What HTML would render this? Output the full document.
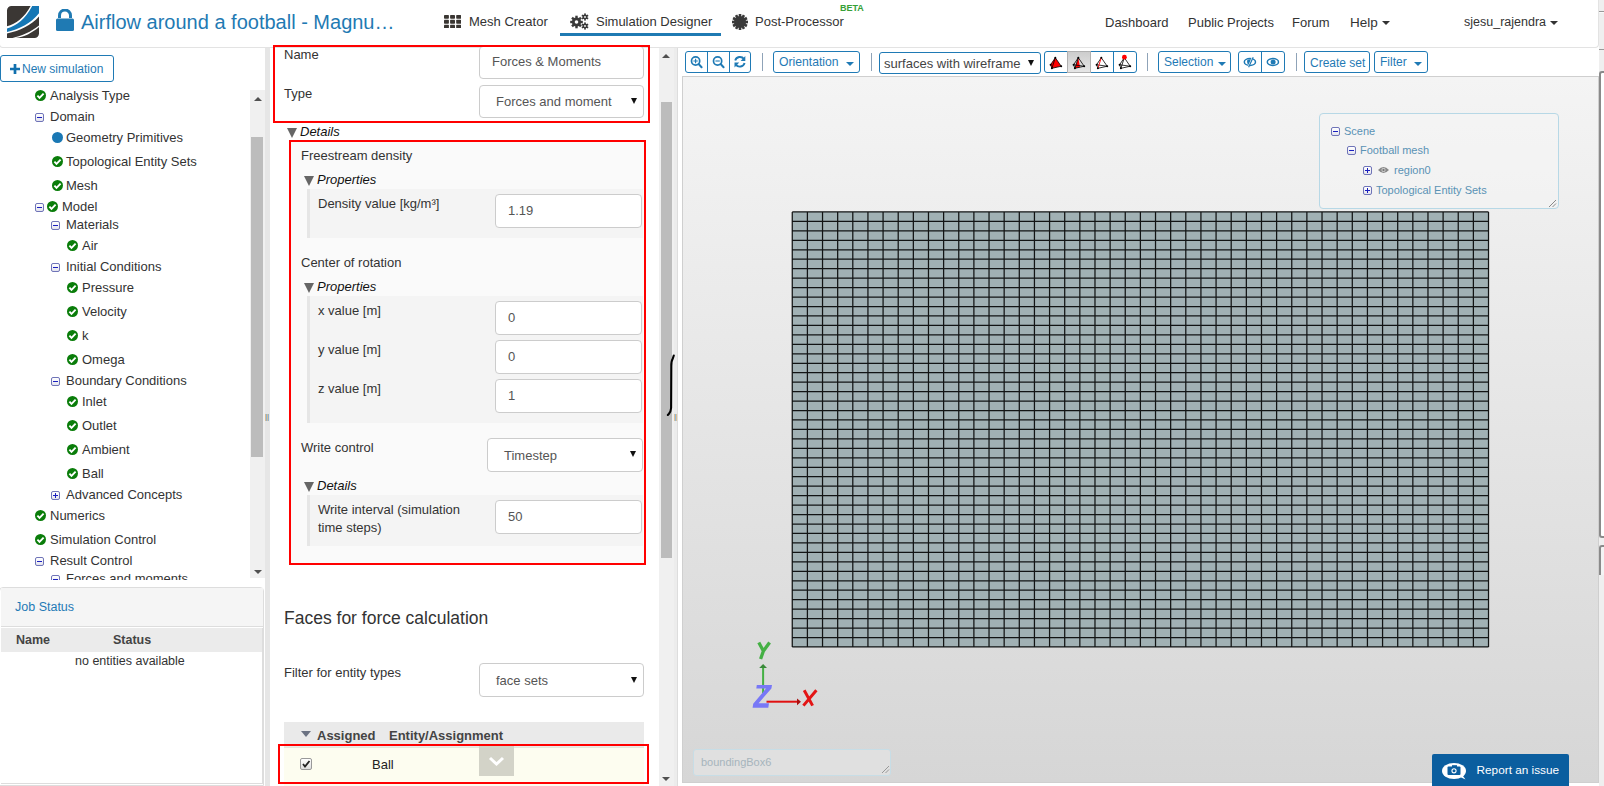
<!DOCTYPE html>
<html><head><meta charset="utf-8">
<style>
*{box-sizing:border-box}
html,body{margin:0;padding:0;width:1604px;height:786px;overflow:hidden;background:#fff;font-family:"Liberation Sans",sans-serif;color:#333}
.a{position:absolute}
.t{position:absolute;white-space:nowrap;line-height:1}
.red{position:absolute;border:2px solid #f00}
.inp{position:absolute;background:#fff;border:1px solid #ccc;border-radius:4px}
.sel{position:absolute;background:#fff;border:1px solid #ccc;border-radius:4px}
.gsec{position:absolute;background:#f4f4f4;border-left:3px solid #e6e6e6}
.tri{position:absolute;width:0;height:0;border-left:6px solid transparent;border-right:6px solid transparent;border-top:11px solid #555}
.chk{position:absolute;width:11px;height:11px;border-radius:50%;background:#0b7d12}
.chk:after{content:"";position:absolute;left:2.3px;top:2.6px;width:6.5px;height:3.8px;border-left:2px solid #fff;border-bottom:2px solid #fff;transform:rotate(-45deg)}
.mbox{position:absolute;width:9px;height:9px;border:1px solid #6f74b8;border-radius:2px;background:linear-gradient(#fff,#e4e4ee)}
.mbox:after{content:"";position:absolute;left:1px;top:3px;width:5px;height:1px;background:#1a1fc0}
.pbox{position:absolute;width:9px;height:9px;border:1px solid #6f74b8;border-radius:2px;background:linear-gradient(#fff,#e4e4ee)}
.pbox:after{content:"";position:absolute;left:1px;top:3px;width:5px;height:1px;background:#1a1fc0}
.pbox:before{content:"";position:absolute;left:3px;top:1px;width:1px;height:5px;background:#1a1fc0}
.btn{position:absolute;border:1px solid #1f7ab5;border-radius:3px;background:#fff;color:#1f7ab5}
.caret{position:absolute;width:0;height:0;border-left:4px solid transparent;border-right:4px solid transparent;border-top:4px solid #333}
</style></head><body>

<!-- ===== HEADER ===== -->
<div class="a" style="left:-1px;top:0;width:1600px;height:48px;background:#fff;border:1px solid #e3e3e3;border-top:none;border-radius:0 0 4px 4px"></div>
<div class="a" style="left:1599px;top:0;width:5px;height:786px;background:#efefef"></div>
<div class="a" style="left:1599px;top:11px;width:5px;height:1px;background:#999"></div><div class="a" style="left:1599px;top:12px;width:5px;height:1px;background:#fafafa"></div>
<div class="a" style="left:1599px;top:49px;width:5px;height:1px;background:#999"></div>
<div class="a" style="left:1599px;top:71px;width:6px;height:467px;border-left:2px solid #8a8a8a;border-top:2px solid #8a8a8a;border-bottom:2px solid #8a8a8a;border-radius:3px 0 0 3px;background:#fff"></div>
<div class="a" style="left:1599px;top:545px;width:6px;height:30px;border-left:2px solid #8a8a8a;border-top:2px solid #8a8a8a;border-radius:3px 0 0 0;background:#f4f4f4"></div>

<!-- logo -->
<svg class="a" style="left:7px;top:6px" width="32" height="32" viewBox="0 0 32 32">
  <defs><clipPath id="lc"><path d="M4.5 0 H32 V27.5 A4.5 4.5 0 0 1 27.5 32 H0 V4.5 A4.5 4.5 0 0 1 4.5 0Z"/></clipPath></defs>
  <g clip-path="url(#lc)">
  <rect width="32" height="32" fill="#3b3734"/>
  <path d="M23.6 0 C17 12 9 18 0 20.3 L0 27.5 C13 25 24 19.5 32 10.6 L32 0Z" fill="#fff"/>
  <path d="M25.2 0 C18.5 13 10 19.5 0 22.5 L0 25.9 C13 23 24 17 32 7.2 L32 0Z" fill="#1577b5"/>
  <path d="M32 19.6 C24 26 15 30 5.5 32 L8.5 32 C17 31 25 27 32 21Z" fill="#fff"/>
  </g>
</svg>
<!-- lock -->
<svg class="a" style="left:56px;top:9px" width="18" height="22" viewBox="0 0 18 22">
  <path d="M3.5 9 V6.5 A5.5 5.5 0 0 1 14.5 6.5 V9" fill="none" stroke="#1f7ab3" stroke-width="3"/>
  <rect x="0" y="9.5" width="18" height="12.5" rx="1.5" fill="#1f7ab3"/>
</svg>
<div class="t" style="left:81px;top:12px;font-size:20px;color:#1f7ab3">Airflow around a football - Magnu…</div>

<!-- nav -->
<svg class="a" style="left:444px;top:14.5px" width="17" height="13.5" viewBox="0 0 17 13.5">
  <g fill="#3a3632"><rect x="0.0" y="0.00" width="4.9" height="3.8" rx=".7"/><rect x="6.1" y="0.00" width="4.9" height="3.8" rx=".7"/><rect x="12.2" y="0.00" width="4.9" height="3.8" rx=".7"/><rect x="0.0" y="4.85" width="4.9" height="3.8" rx=".7"/><rect x="6.1" y="4.85" width="4.9" height="3.8" rx=".7"/><rect x="12.2" y="4.85" width="4.9" height="3.8" rx=".7"/><rect x="0.0" y="9.70" width="4.9" height="3.8" rx=".7"/><rect x="6.1" y="9.70" width="4.9" height="3.8" rx=".7"/><rect x="12.2" y="9.70" width="4.9" height="3.8" rx=".7"/></g>
</svg>
<div class="t" style="left:469px;top:14.7px;font-size:13px;color:#333">Mesh Creator</div>
<svg class="a" style="left:570px;top:13px" width="19" height="17" viewBox="0 0 19 17">
  <g fill="#3a3a3a">
   <circle cx="6.5" cy="9" r="4.6"/>
   <g transform="translate(6.5 9)"><rect x="-1.2" y="-6.3" width="2.4" height="12.6"/><rect x="-1.2" y="-6.3" width="2.4" height="12.6" transform="rotate(45)"/><rect x="-1.2" y="-6.3" width="2.4" height="12.6" transform="rotate(90)"/><rect x="-1.2" y="-6.3" width="2.4" height="12.6" transform="rotate(135)"/></g>
   <circle cx="15" cy="4" r="2.4"/>
   <g transform="translate(15 4)"><rect x="-.8" y="-3.6" width="1.6" height="7.2"/><rect x="-.8" y="-3.6" width="1.6" height="7.2" transform="rotate(60)"/><rect x="-.8" y="-3.6" width="1.6" height="7.2" transform="rotate(120)"/></g>
   <circle cx="15" cy="13" r="2.4"/>
   <g transform="translate(15 13)"><rect x="-.8" y="-3.6" width="1.6" height="7.2"/><rect x="-.8" y="-3.6" width="1.6" height="7.2" transform="rotate(60)"/><rect x="-.8" y="-3.6" width="1.6" height="7.2" transform="rotate(120)"/></g>
  </g>
  <circle cx="6.5" cy="9" r="1.8" fill="#fff"/><circle cx="15" cy="4" r=".9" fill="#fff"/><circle cx="15" cy="13" r=".9" fill="#fff"/>
</svg>
<div class="t" style="left:596px;top:14.7px;font-size:13px;color:#333">Simulation Designer</div>
<div class="a" style="left:560px;top:33px;width:161px;height:3px;background:#1f7ab3"></div>
<svg class="a" style="left:732px;top:14px" width="16" height="16" viewBox="0 0 16 16">
  <g fill="#3a3a3a" transform="translate(8 8)">
  <circle r="6"/>
  <rect x="-1.3" y="-8" width="2.6" height="16"/><rect x="-1.3" y="-8" width="2.6" height="16" transform="rotate(30)"/><rect x="-1.3" y="-8" width="2.6" height="16" transform="rotate(60)"/><rect x="-1.3" y="-8" width="2.6" height="16" transform="rotate(90)"/><rect x="-1.3" y="-8" width="2.6" height="16" transform="rotate(120)"/><rect x="-1.3" y="-8" width="2.6" height="16" transform="rotate(150)"/>
  </g>
</svg>
<div class="t" style="left:755px;top:14.7px;font-size:13px;color:#333">Post-Processor</div>
<div class="t" style="left:840px;top:4px;font-size:9px;font-weight:700;color:#36a036">BETA</div>

<div class="t" style="left:1105px;top:16px;font-size:13px;color:#333">Dashboard</div>
<div class="t" style="left:1188px;top:16px;font-size:13px;color:#333">Public Projects</div>
<div class="t" style="left:1292px;top:16px;font-size:13px;color:#333">Forum</div>
<div class="t" style="left:1350px;top:15.5px;font-size:13.5px;color:#333">Help</div>
<div class="caret" style="left:1382px;top:21px"></div>
<div class="t" style="left:1464px;top:16px;font-size:12.5px;color:#333">sjesu_rajendra</div>
<div class="caret" style="left:1550px;top:21px"></div>

<!-- ===== LEFT PANEL ===== -->
<div class="btn" style="left:0;top:55px;width:114px;height:27px"></div>
<svg class="a" style="left:10px;top:63.5px" width="10" height="10" viewBox="0 0 10 10"><path d="M0 5 H10 M5 0 V10" stroke="#1170ae" stroke-width="2.7"/></svg>
<div class="t" style="left:22px;top:63px;font-size:12px;color:#1f7ab5">New simulation</div>

<!-- scrollbar -->
<div class="a" style="left:250px;top:90px;width:15px;height:488px;background:#f0f0f0"></div>
<div class="a" style="left:251px;top:137px;width:12px;height:320px;background:#bcbcbc"></div>
<div class="a" style="left:254px;top:97px;width:0;height:0;border-left:4px solid transparent;border-right:4px solid transparent;border-bottom:4px solid #505050"></div>
<div class="a" style="left:254px;top:570px;width:0;height:0;border-left:4px solid transparent;border-right:4px solid transparent;border-top:4px solid #505050"></div>

<div id="tree" class="a" style="left:0;top:84px;width:250px;height:496px;overflow:hidden">
<svg class="a" style="left:35px;top:5.5px" width="11" height="11" viewBox="0 0 11 11"><circle cx="5.5" cy="5.5" r="5.5" fill="#0a7d0a"/><path d="M2.4 5.7 L4.5 7.8 L8.6 3.7" fill="none" stroke="#fff" stroke-width="1.9"/></svg>
<div class="t" style="left:50px;top:5.0px;font-size:13px">Analysis Type</div>
<div class="mbox" style="left:35px;top:29.0px"></div>
<div class="t" style="left:50px;top:25.5px;font-size:13px">Domain</div>
<div class="a" style="left:52px;top:48.0px;width:11px;height:11px;border-radius:50%;background:#1a78b4"></div>
<div class="t" style="left:66px;top:46.5px;font-size:13px">Geometry Primitives</div>
<svg class="a" style="left:52px;top:72.0px" width="11" height="11" viewBox="0 0 11 11"><circle cx="5.5" cy="5.5" r="5.5" fill="#0a7d0a"/><path d="M2.4 5.7 L4.5 7.8 L8.6 3.7" fill="none" stroke="#fff" stroke-width="1.9"/></svg>
<div class="t" style="left:66px;top:70.5px;font-size:13px">Topological Entity Sets</div>
<svg class="a" style="left:52px;top:96.0px" width="11" height="11" viewBox="0 0 11 11"><circle cx="5.5" cy="5.5" r="5.5" fill="#0a7d0a"/><path d="M2.4 5.7 L4.5 7.8 L8.6 3.7" fill="none" stroke="#fff" stroke-width="1.9"/></svg>
<div class="t" style="left:66px;top:94.5px;font-size:13px">Mesh</div>
<div class="mbox" style="left:35px;top:119.0px"></div>
<svg class="a" style="left:47px;top:117.0px" width="11" height="11" viewBox="0 0 11 11"><circle cx="5.5" cy="5.5" r="5.5" fill="#0a7d0a"/><path d="M2.4 5.7 L4.5 7.8 L8.6 3.7" fill="none" stroke="#fff" stroke-width="1.9"/></svg>
<div class="t" style="left:62px;top:115.5px;font-size:13px">Model</div>
<div class="mbox" style="left:51px;top:137.0px"></div>
<div class="t" style="left:66px;top:133.5px;font-size:13px">Materials</div>
<svg class="a" style="left:67px;top:156.0px" width="11" height="11" viewBox="0 0 11 11"><circle cx="5.5" cy="5.5" r="5.5" fill="#0a7d0a"/><path d="M2.4 5.7 L4.5 7.8 L8.6 3.7" fill="none" stroke="#fff" stroke-width="1.9"/></svg>
<div class="t" style="left:82px;top:154.5px;font-size:13px">Air</div>
<div class="mbox" style="left:51px;top:179.0px"></div>
<div class="t" style="left:66px;top:175.5px;font-size:13px">Initial Conditions</div>
<svg class="a" style="left:67px;top:198.0px" width="11" height="11" viewBox="0 0 11 11"><circle cx="5.5" cy="5.5" r="5.5" fill="#0a7d0a"/><path d="M2.4 5.7 L4.5 7.8 L8.6 3.7" fill="none" stroke="#fff" stroke-width="1.9"/></svg>
<div class="t" style="left:82px;top:196.5px;font-size:13px">Pressure</div>
<svg class="a" style="left:67px;top:222.0px" width="11" height="11" viewBox="0 0 11 11"><circle cx="5.5" cy="5.5" r="5.5" fill="#0a7d0a"/><path d="M2.4 5.7 L4.5 7.8 L8.6 3.7" fill="none" stroke="#fff" stroke-width="1.9"/></svg>
<div class="t" style="left:82px;top:220.5px;font-size:13px">Velocity</div>
<svg class="a" style="left:67px;top:246.0px" width="11" height="11" viewBox="0 0 11 11"><circle cx="5.5" cy="5.5" r="5.5" fill="#0a7d0a"/><path d="M2.4 5.7 L4.5 7.8 L8.6 3.7" fill="none" stroke="#fff" stroke-width="1.9"/></svg>
<div class="t" style="left:82px;top:244.5px;font-size:13px">k</div>
<svg class="a" style="left:67px;top:270.0px" width="11" height="11" viewBox="0 0 11 11"><circle cx="5.5" cy="5.5" r="5.5" fill="#0a7d0a"/><path d="M2.4 5.7 L4.5 7.8 L8.6 3.7" fill="none" stroke="#fff" stroke-width="1.9"/></svg>
<div class="t" style="left:82px;top:268.5px;font-size:13px">Omega</div>
<div class="mbox" style="left:51px;top:293.0px"></div>
<div class="t" style="left:66px;top:289.5px;font-size:13px">Boundary Conditions</div>
<svg class="a" style="left:67px;top:312.0px" width="11" height="11" viewBox="0 0 11 11"><circle cx="5.5" cy="5.5" r="5.5" fill="#0a7d0a"/><path d="M2.4 5.7 L4.5 7.8 L8.6 3.7" fill="none" stroke="#fff" stroke-width="1.9"/></svg>
<div class="t" style="left:82px;top:310.5px;font-size:13px">Inlet</div>
<svg class="a" style="left:67px;top:336.0px" width="11" height="11" viewBox="0 0 11 11"><circle cx="5.5" cy="5.5" r="5.5" fill="#0a7d0a"/><path d="M2.4 5.7 L4.5 7.8 L8.6 3.7" fill="none" stroke="#fff" stroke-width="1.9"/></svg>
<div class="t" style="left:82px;top:334.5px;font-size:13px">Outlet</div>
<svg class="a" style="left:67px;top:360.0px" width="11" height="11" viewBox="0 0 11 11"><circle cx="5.5" cy="5.5" r="5.5" fill="#0a7d0a"/><path d="M2.4 5.7 L4.5 7.8 L8.6 3.7" fill="none" stroke="#fff" stroke-width="1.9"/></svg>
<div class="t" style="left:82px;top:358.5px;font-size:13px">Ambient</div>
<svg class="a" style="left:67px;top:384.0px" width="11" height="11" viewBox="0 0 11 11"><circle cx="5.5" cy="5.5" r="5.5" fill="#0a7d0a"/><path d="M2.4 5.7 L4.5 7.8 L8.6 3.7" fill="none" stroke="#fff" stroke-width="1.9"/></svg>
<div class="t" style="left:82px;top:382.5px;font-size:13px">Ball</div>
<div class="pbox" style="left:51px;top:407.0px"></div>
<div class="t" style="left:66px;top:403.5px;font-size:13px">Advanced Concepts</div>
<svg class="a" style="left:35px;top:426.0px" width="11" height="11" viewBox="0 0 11 11"><circle cx="5.5" cy="5.5" r="5.5" fill="#0a7d0a"/><path d="M2.4 5.7 L4.5 7.8 L8.6 3.7" fill="none" stroke="#fff" stroke-width="1.9"/></svg>
<div class="t" style="left:50px;top:424.5px;font-size:13px">Numerics</div>
<svg class="a" style="left:35px;top:450.0px" width="11" height="11" viewBox="0 0 11 11"><circle cx="5.5" cy="5.5" r="5.5" fill="#0a7d0a"/><path d="M2.4 5.7 L4.5 7.8 L8.6 3.7" fill="none" stroke="#fff" stroke-width="1.9"/></svg>
<div class="t" style="left:50px;top:448.5px;font-size:13px">Simulation Control</div>
<div class="mbox" style="left:35px;top:473.0px"></div>
<div class="t" style="left:50px;top:469.5px;font-size:13px">Result Control</div>
<div class="mbox" style="left:51px;top:491.0px"></div>
<div class="t" style="left:66px;top:487.5px;font-size:13px">Forces and moments</div>
</div>

<!-- splitter -->
<div class="a" style="left:265px;top:48px;width:5px;height:738px;background:#e6e6e6"></div>

<!-- job status -->
<div class="a" style="left:-1px;top:587px;width:265px;height:199px;border:1px solid #ddd;border-radius:4px 4px 0 0;background:#fff"></div>
<div class="a" style="left:1px;top:588px;width:262px;height:39px;background:#f5f5f5;border-bottom:1px solid #ddd"></div>
<div class="t" style="left:15px;top:601px;font-size:12.5px;color:#1f7ab5">Job Status</div>
<div class="a" style="left:1px;top:628px;width:261px;height:24px;background:#ebebeb"></div>
<div class="t" style="left:16px;top:634px;font-size:12.5px;font-weight:700;color:#444">Name</div>
<div class="t" style="left:113px;top:634px;font-size:12.5px;font-weight:700;color:#444">Status</div>
<div class="t" style="left:75px;top:655px;font-size:12.5px;color:#333">no entities available</div>
<div class="a" style="left:262px;top:628px;width:1px;height:156px;background:#ddd"></div>
<div class="a" style="left:1px;top:783px;width:262px;height:1px;background:#ddd"></div>

<!-- ===== MIDDLE PANEL ===== -->
<div class="a" style="left:270px;top:48px;width:389px;height:738px;background:#fff"></div>
<!-- middle scrollbar -->
<div class="a" style="left:659px;top:48px;width:15px;height:738px;background:#f0f0f0"></div>
<div class="a" style="left:661px;top:102px;width:11px;height:456px;background:#bcbcbc"></div>
<div class="a" style="left:662px;top:54px;width:0;height:0;border-left:4.5px solid transparent;border-right:4.5px solid transparent;border-bottom:4.5px solid #505050"></div>
<div class="a" style="left:662px;top:777px;width:0;height:0;border-left:4.5px solid transparent;border-right:4.5px solid transparent;border-top:4.5px solid #505050"></div>
<div class="a" style="left:674px;top:48px;width:8px;height:738px;background:#ececec"></div>
<!-- hand-drawn bracket -->
<svg class="a" style="left:664px;top:352px" width="14" height="68" viewBox="0 0 14 68">
  <path d="M9.8 3.5 L8.6 7 Q7.3 9 7.3 14 L7.1 56 Q6.8 60 4.8 62 L3.8 63" fill="none" stroke="#000" stroke-width="2.1" stroke-linecap="round"/>
</svg>
<div class="t" style="left:674px;top:413px;font-size:8px;color:#555">||</div>
<div class="t" style="left:265px;top:413px;font-size:8px;color:#555">||</div>

<!-- red box 1 -->
<div class="inp" style="left:479px;top:46px;width:165px;height:33px"></div>
<div class="t" style="left:492px;top:55px;font-size:13px;color:#555">Forces &amp; Moments</div>
<div class="sel" style="left:479px;top:85px;width:165px;height:33px"></div>
<div class="t" style="left:496px;top:95px;font-size:13px;color:#555">Forces and moment</div>
<div class="a" style="left:631px;top:98px;width:0;height:0;border-left:3.5px solid transparent;border-right:3.5px solid transparent;border-top:6px solid #111"></div>
<div class="red" style="left:273px;top:45px;width:377px;height:78px"></div>
<div class="t" style="left:284px;top:48px;font-size:13px">Name</div>
<div class="t" style="left:284px;top:87px;font-size:13px">Type</div>

<div class="tri" style="left:287px;top:128px;border-left-width:5.5px;border-right-width:5.5px;border-top-width:10px;border-top-color:#666"></div>
<div class="t" style="left:300px;top:124.6px;font-size:13px;font-style:italic;color:#111">Details</div>

<!-- red box 2 -->
<div class="a" style="left:291px;top:142px;width:353px;height:421px;background:#fafafa"></div>
<div class="t" style="left:301px;top:149px;font-size:13px">Freestream density</div>
<div class="tri" style="left:304px;top:176px;border-left-width:5.5px;border-right-width:5.5px;border-top-width:10px;border-top-color:#666"></div>
<div class="t" style="left:317px;top:172.6px;font-size:13px;font-style:italic;color:#111">Properties</div>
<div class="gsec" style="left:307px;top:189px;width:336px;height:49px"></div>
<div class="t" style="left:318px;top:197px;font-size:13px">Density value [kg/m³]</div>
<div class="inp" style="left:495px;top:194px;width:147px;height:34px"></div>
<div class="t" style="left:508px;top:204px;font-size:13px;color:#555">1.19</div>

<div class="t" style="left:301px;top:256px;font-size:13px">Center of rotation</div>
<div class="tri" style="left:304px;top:283px;border-left-width:5.5px;border-right-width:5.5px;border-top-width:10px;border-top-color:#666"></div>
<div class="t" style="left:317px;top:280px;font-size:13px;font-style:italic;color:#111">Properties</div>
<div class="gsec" style="left:307px;top:296px;width:336px;height:127px"></div>
<div class="t" style="left:318px;top:304.3px;font-size:13px">x value [m]</div>
<div class="t" style="left:318px;top:343.3px;font-size:13px">y value [m]</div>
<div class="t" style="left:318px;top:382.2px;font-size:13px">z value [m]</div>
<div class="inp" style="left:495px;top:301px;width:147px;height:34px"></div>
<div class="inp" style="left:495px;top:340px;width:147px;height:34px"></div>
<div class="inp" style="left:495px;top:379px;width:147px;height:34px"></div>
<div class="t" style="left:508px;top:311px;font-size:13px;color:#555">0</div>
<div class="t" style="left:508px;top:350px;font-size:13px;color:#555">0</div>
<div class="t" style="left:508px;top:389px;font-size:13px;color:#555">1</div>

<div class="t" style="left:301px;top:440.7px;font-size:13px">Write control</div>
<div class="sel" style="left:487px;top:438px;width:156px;height:34px"></div>
<div class="t" style="left:504px;top:449.4px;font-size:13px;color:#555">Timestep</div>
<div class="a" style="left:630px;top:451px;width:0;height:0;border-left:3.5px solid transparent;border-right:3.5px solid transparent;border-top:6px solid #111"></div>
<div class="tri" style="left:304px;top:482px;border-left-width:5.5px;border-right-width:5.5px;border-top-width:10px;border-top-color:#666"></div>
<div class="t" style="left:317px;top:478.7px;font-size:13px;font-style:italic;color:#111">Details</div>
<div class="gsec" style="left:307px;top:495px;width:336px;height:51px"></div>
<div class="t" style="left:318px;top:502.7px;font-size:13px">Write interval (simulation</div>
<div class="t" style="left:318px;top:520.5px;font-size:13px">time steps)</div>
<div class="inp" style="left:495px;top:500px;width:147px;height:34px"></div>
<div class="t" style="left:508px;top:510px;font-size:13px;color:#555">50</div>
<div class="red" style="left:289px;top:140px;width:357px;height:425px"></div>

<div class="t" style="left:284px;top:610.2px;font-size:17.5px">Faces for force calculation</div>
<div class="t" style="left:284px;top:666px;font-size:13px">Filter for entity types</div>
<div class="sel" style="left:479px;top:663px;width:165px;height:34px"></div>
<div class="t" style="left:496px;top:673.6px;font-size:13px;color:#555">face sets</div>
<div class="a" style="left:631px;top:677px;width:0;height:0;border-left:3.5px solid transparent;border-right:3.5px solid transparent;border-top:6px solid #111"></div>

<div class="a" style="left:284px;top:722px;width:360px;height:64px;background:#eaeaea"></div>
<div class="a" style="left:300.5px;top:731px;width:0;height:0;border-left:5px solid transparent;border-right:5px solid transparent;border-top:6px solid #6b7282"></div>
<div class="t" style="left:317px;top:728.6px;font-size:13px;font-weight:700;color:#444">Assigned</div>
<div class="t" style="left:389px;top:728.6px;font-size:13px;font-weight:700;color:#444">Entity/Assignment</div>
<div class="a" style="left:284px;top:747px;width:360px;height:39px;background:#fdfdf0;border-top:1px solid #e6e6da"></div>
<div class="a" style="left:300px;top:758px;width:12px;height:12px;border:1px solid #999;border-radius:2px;background:linear-gradient(#fff,#ddd)"></div>
<svg class="a" style="left:301px;top:759px" width="10" height="10" viewBox="0 0 10 10"><path d="M2 5 L4 7.5 L8.5 2" fill="none" stroke="#222" stroke-width="1.8"/></svg>
<div class="t" style="left:372px;top:757.8px;font-size:13px;color:#222">Ball</div>
<div class="a" style="left:479px;top:746px;width:35px;height:30px;background:#d3d3c8"></div>
<svg class="a" style="left:487px;top:754px" width="19" height="14" viewBox="0 0 19 14"><path d="M3 4 L9.5 10 L16 4" fill="none" stroke="#fff" stroke-width="3"/></svg>
<div class="red" style="left:278px;top:744px;width:371px;height:40px"></div>


<!-- ===== VIEWER ===== -->
<div class="a" style="left:677px;top:48px;width:922px;height:738px;background:#fff;border-left:1px solid #ddd"></div>
<!-- toolbar -->
<div class="btn" style="left:685px;top:51px;width:66px;height:22px;border-radius:3px"></div>
<div class="a" style="left:707px;top:51px;width:1px;height:22px;background:#1f7ab5"></div>
<div class="a" style="left:729px;top:51px;width:1px;height:22px;background:#1f7ab5"></div>
<svg class="a" style="left:689px;top:54px" width="16" height="16" viewBox="0 0 16 16">
  <circle cx="6.6" cy="7" r="4.1" fill="none" stroke="#1f7ab5" stroke-width="1.7"/>
  <path d="M9.6 10 L12.6 13.2" stroke="#1f7ab5" stroke-width="2" stroke-linecap="round"/>
  <path d="M4.4 7 H8.8 M6.6 4.8 V9.2" stroke="#1f7ab5" stroke-width="1.1"/>
</svg>
<svg class="a" style="left:711px;top:54px" width="16" height="16" viewBox="0 0 16 16">
  <circle cx="6.6" cy="7" r="4.1" fill="none" stroke="#1f7ab5" stroke-width="1.7"/>
  <path d="M9.6 10 L12.6 13.2" stroke="#1f7ab5" stroke-width="2" stroke-linecap="round"/>
  <path d="M4.4 7 H8.8" stroke="#1f7ab5" stroke-width="1.1"/>
</svg>
<svg class="a" style="left:732px;top:54px" width="16" height="16" viewBox="0 0 16 16">
  <path d="M3.2 6.5 A5 5 0 0 1 12 5" fill="none" stroke="#1f7ab5" stroke-width="1.9"/>
  <path d="M13.3 2 V7 H8.6Z" fill="#1f7ab5"/>
  <path d="M12.6 9 A5 5 0 0 1 3.8 10.6" fill="none" stroke="#1f7ab5" stroke-width="1.9"/>
  <path d="M2.5 13.6 V8.6 H7.2Z" fill="#1f7ab5"/>
</svg>
<div class="a" style="left:762px;top:53px;width:1px;height:18px;background:#8fa3b8"></div>

<div class="btn" style="left:773px;top:51px;width:87px;height:22px;border-radius:3px"></div>
<div class="t" style="left:779px;top:56px;font-size:12.2px;color:#1f7ab5">Orientation</div>
<div class="caret" style="left:846px;top:62px;border-top-color:#1f7ab5;border-left-width:4px;border-right-width:4px;border-top-width:4.5px"></div>
<div class="a" style="left:871px;top:53px;width:1px;height:18px;background:#8fa3b8"></div>

<div class="a" style="left:879px;top:52px;width:162px;height:22px;border:1px solid #1f7ab5;border-radius:3px;background:#fff"></div>
<div class="t" style="left:884px;top:56.5px;font-size:13px;color:#444">surfaces with wireframe</div>
<div class="a" style="left:1028px;top:60px;width:0;height:0;border-left:3.5px solid transparent;border-right:3.5px solid transparent;border-top:6px solid #111"></div>

<div class="btn" style="left:1044px;top:51px;width:93px;height:22px;border-radius:3px"></div>
<div class="a" style="left:1067px;top:51px;width:24px;height:22px;background:linear-gradient(#cdcdcd,#e6e6e6);border:1px solid #b0b0b0"></div>
<div class="a" style="left:1113px;top:51px;width:1px;height:22px;background:#1f7ab5"></div>
<svg class="a" style="left:1048px;top:54px" width="16" height="16" viewBox="0 0 16 16">
  <path d="M7.3 3.7 L2.6 10.75 L3.9 14.3 L13.2 12.25Z" fill="#f00"/>
  <path d="M7.3 3.7 L2.6 10.75 L3.9 14.3 L13.2 12.25Z M7.3 3.7 L3.9 14.3" fill="none" stroke="#000" stroke-width=".8"/>
  <circle cx="7.3" cy="3.7" r="1" fill="#000"/><circle cx="2.6" cy="10.75" r="1" fill="#000"/><circle cx="3.9" cy="14.3" r="1" fill="#000"/><circle cx="13.2" cy="12.25" r="1" fill="#000"/>
</svg>
<svg class="a" style="left:1071px;top:54px" width="16" height="16" viewBox="0 0 16 16">
  <path d="M7.3 3.7 L3.9 14.3 L9 13.2Z" fill="#f00"/>
  <path d="M7.3 3.7 L2.6 10.75 L3.9 14.3 L13.2 12.25Z M7.3 3.7 L3.9 14.3 M2.6 10.75 L13.2 12.25" fill="none" stroke="#000" stroke-width=".8"/>
  <circle cx="7.3" cy="3.7" r="1" fill="#000"/><circle cx="2.6" cy="10.75" r="1" fill="#000"/><circle cx="3.9" cy="14.3" r="1" fill="#000"/><circle cx="13.2" cy="12.25" r="1" fill="#000"/>
</svg>
<svg class="a" style="left:1094px;top:54px" width="16" height="16" viewBox="0 0 16 16">
  <path d="M7.3 3.7 L2.6 10.75 L3.9 14.3 L13.2 12.25Z M2.6 10.75 L13.2 12.25" fill="none" stroke="#000" stroke-width=".8"/>
  <path d="M7.3 3.7 L3.9 14.3" stroke="#f00" stroke-width=".9"/>
  <circle cx="7.3" cy="3.7" r="1" fill="#000"/><circle cx="2.6" cy="10.75" r="1" fill="#000"/><circle cx="3.9" cy="14.3" r="1" fill="#000"/><circle cx="13.2" cy="12.25" r="1" fill="#000"/>
</svg>
<svg class="a" style="left:1117px;top:54px" width="16" height="16" viewBox="0 0 16 16">
  <path d="M7.3 3.7 L2.6 10.75 L3.9 14.3 L13.2 12.25Z M7.3 3.7 L3.9 14.3 M2.6 10.75 L13.2 12.25" fill="none" stroke="#000" stroke-width=".8"/>
  <circle cx="2.6" cy="10.75" r="1" fill="#000"/><circle cx="3.9" cy="14.3" r="1" fill="#000"/><circle cx="13.2" cy="12.25" r="1" fill="#000"/>
  <circle cx="7.4" cy="3.2" r="2.4" fill="#f00"/>
</svg>
<div class="a" style="left:1147px;top:53px;width:1px;height:18px;background:#8fa3b8"></div>

<div class="btn" style="left:1158px;top:51px;width:73px;height:22px;border-radius:3px"></div>
<div class="t" style="left:1164px;top:56px;font-size:12px;color:#1f7ab5">Selection</div>
<div class="caret" style="left:1218px;top:62px;border-top-color:#1f7ab5;border-top-width:4.5px"></div>
<div class="btn" style="left:1238px;top:51px;width:47px;height:22px;border-radius:3px"></div>
<div class="a" style="left:1261px;top:51px;width:1px;height:22px;background:#1f7ab5"></div>
<svg class="a" style="left:1242px;top:55px" width="16" height="14" viewBox="0 0 16 14">
  <ellipse cx="7.9" cy="7" rx="5.6" ry="3.4" fill="none" stroke="#1f7ab5" stroke-width="1.5"/>
  <path d="M5.2 5.2 Q6.5 3.9 9.5 4.2 L7 10 Q4.6 8.6 5.2 5.2Z" fill="#1f7ab5"/>
  <path d="M10.8 2 L6.4 12" stroke="#fff" stroke-width="1.6"/>
  <path d="M11.2 2.2 L6.6 12.3" stroke="#1f7ab5" stroke-width="1.2"/>
</svg>
<svg class="a" style="left:1265px;top:55px" width="16" height="14" viewBox="0 0 16 14">
  <ellipse cx="7.9" cy="7" rx="5.6" ry="3.4" fill="none" stroke="#1f7ab5" stroke-width="1.5"/>
  <circle cx="8.1" cy="6.9" r="2.5" fill="#1f7ab5"/>
</svg>
<div class="a" style="left:1296px;top:53px;width:1px;height:18px;background:#8fa3b8"></div>
<div class="btn" style="left:1304px;top:51px;width:66px;height:22px;border-radius:3px"></div>
<div class="t" style="left:1310px;top:57px;font-size:12px;color:#1f7ab5">Create set</div>
<div class="btn" style="left:1374px;top:51px;width:54px;height:22px;border-radius:3px"></div>
<div class="t" style="left:1380px;top:56px;font-size:12px;color:#1f7ab5">Filter</div>
<div class="caret" style="left:1414px;top:62px;border-top-color:#1f7ab5;border-top-width:4.5px"></div>

<!-- canvas -->
<div class="a" style="left:682px;top:76px;width:917px;height:707px;border:1px solid #cfcfcf;background:linear-gradient(#f4f4f4,#d6d6d6)"></div>

<!-- scene tree -->
<div class="a" style="left:1319px;top:113px;width:240px;height:96px;border:1px solid #b7d8e6;border-radius:4px;background:rgba(245,245,245,.5)"></div>
<div class="mbox" style="left:1331px;top:127px"></div>
<div class="t" style="left:1344px;top:126px;font-size:11px;color:#5a92b5">Scene</div>
<div class="mbox" style="left:1347px;top:146px"></div>
<div class="t" style="left:1360px;top:145px;font-size:11px;color:#5a92b5">Football mesh</div>
<div class="pbox" style="left:1363px;top:166px"></div>
<svg class="a" style="left:1377px;top:165px" width="13" height="10" viewBox="0 0 13 10"><path d="M1 5 Q6.5 -1 12 5 Q6.5 11 1 5Z" fill="#888"/><circle cx="6.5" cy="5" r="2" fill="#ddd"/><circle cx="6.5" cy="5" r="1.2" fill="#777"/></svg>
<div class="t" style="left:1394px;top:165px;font-size:11px;color:#5a92b5">region0</div>
<div class="pbox" style="left:1363px;top:186px"></div>
<div class="t" style="left:1376px;top:185px;font-size:11px;color:#5a92b5">Topological Entity Sets</div>
<svg class="a" style="left:1548px;top:199px" width="9" height="9" viewBox="0 0 9 9"><path d="M1 8 L8 1 M4.5 8 L8 4.5" stroke="#888" stroke-width="1"/></svg>

<!-- mesh -->
<svg class="a" style="left:790px;top:210px" width="702" height="440" viewBox="0 0 702 440">
<rect x="2.26" y="1.94" width="696.26" height="435.02" fill="#a1b1b4"/>
<path d="M2.26 1.94V436.96M17.40 1.94V436.96M32.53 1.94V436.96M47.67 1.94V436.96M62.80 1.94V436.96M77.94 1.94V436.96M93.08 1.94V436.96M108.21 1.94V436.96M123.35 1.94V436.96M138.48 1.94V436.96M153.62 1.94V436.96M168.76 1.94V436.96M183.89 1.94V436.96M199.03 1.94V436.96M214.16 1.94V436.96M229.30 1.94V436.96M244.44 1.94V436.96M259.57 1.94V436.96M274.71 1.94V436.96M289.84 1.94V436.96M304.98 1.94V436.96M320.12 1.94V436.96M335.25 1.94V436.96M350.39 1.94V436.96M365.52 1.94V436.96M380.66 1.94V436.96M395.80 1.94V436.96M410.93 1.94V436.96M426.07 1.94V436.96M441.20 1.94V436.96M456.34 1.94V436.96M471.48 1.94V436.96M486.61 1.94V436.96M501.75 1.94V436.96M516.88 1.94V436.96M532.02 1.94V436.96M547.16 1.94V436.96M562.29 1.94V436.96M577.43 1.94V436.96M592.56 1.94V436.96M607.70 1.94V436.96M622.84 1.94V436.96M637.97 1.94V436.96M653.11 1.94V436.96M668.24 1.94V436.96M683.38 1.94V436.96M698.52 1.94V436.96M2.26 1.94H698.52M2.26 11.40H698.52M2.26 20.85H698.52M2.26 30.31H698.52M2.26 39.77H698.52M2.26 49.23H698.52M2.26 58.68H698.52M2.26 68.14H698.52M2.26 77.60H698.52M2.26 87.05H698.52M2.26 96.51H698.52M2.26 105.97H698.52M2.26 115.42H698.52M2.26 124.88H698.52M2.26 134.34H698.52M2.26 143.80H698.52M2.26 153.25H698.52M2.26 162.71H698.52M2.26 172.17H698.52M2.26 181.62H698.52M2.26 191.08H698.52M2.26 200.54H698.52M2.26 209.99H698.52M2.26 219.45H698.52M2.26 228.91H698.52M2.26 238.37H698.52M2.26 247.82H698.52M2.26 257.28H698.52M2.26 266.74H698.52M2.26 276.19H698.52M2.26 285.65H698.52M2.26 295.11H698.52M2.26 304.56H698.52M2.26 314.02H698.52M2.26 323.48H698.52M2.26 332.93H698.52M2.26 342.39H698.52M2.26 351.85H698.52M2.26 361.31H698.52M2.26 370.76H698.52M2.26 380.22H698.52M2.26 389.68H698.52M2.26 399.13H698.52M2.26 408.59H698.52M2.26 418.05H698.52M2.26 427.51H698.52M2.26 436.96H698.52" stroke="#121414" stroke-width="1.25" fill="none"/>
</svg>

<!-- axes -->
<svg class="a" style="left:745px;top:635px" width="80" height="80" viewBox="0 0 80 80">
  <path d="M18.1 58 V33" stroke="#44b044" stroke-width="2"/>
  <path d="M14.2 33 L18.1 29 L22 33Z" fill="#3a8a3a"/>
  <path d="M21.5 66.7 H52.5" stroke="#e01010" stroke-width="2"/>
  <path d="M52 63.6 L56 66.7 L52 70.2Z" fill="#a81010"/>
  <path d="M13.8 7.5 L18.4 16 M24.6 7.5 L18.4 16 L15.6 24" fill="none" stroke="#44b044" stroke-width="3.3" stroke-linejoin="bevel"/>
  <path d="M11.8 49.9 H27 L26.4 53.6 L13.6 68.2 H24 L23.3 72.8 H7.6 L8.2 68.8 L21 53.5 H11.3Z" fill="#7878f6"/>
  <path d="M59.2 55.2 L67.6 70.6 M71.4 55.2 L58.4 70.6" fill="none" stroke="#e31515" stroke-width="3"/>
</svg>

<!-- boundingBox textarea -->
<div class="a" style="left:693px;top:748.5px;width:198px;height:27px;border:1px solid #c7dde6;border-radius:3px;background:#e0e0e0"></div>
<div class="t" style="left:701px;top:756.8px;font-size:11px;color:#a6b4bc">boundingBox6</div>
<svg class="a" style="left:881px;top:765px" width="9" height="9" viewBox="0 0 9 9"><path d="M1 8 L8 1 M4.5 8 L8 4.5" stroke="#999" stroke-width="1"/></svg>

<!-- report an issue -->
<div class="a" style="left:1432px;top:754px;width:137px;height:32px;background:#0b5e9f;border-radius:2px 2px 0 0"></div>
<svg class="a" style="left:1441px;top:761px" width="28" height="22" viewBox="0 0 28 22">
  <ellipse cx="13" cy="10" rx="12" ry="8" fill="#fff"/>
  <path d="M17 15 L24.5 18.5 L20.5 13Z" fill="#fff"/>
  <rect x="6.5" y="5.5" width="13" height="8.5" rx="1" fill="#0b5e9f"/>
  <rect x="11" y="4.2" width="5" height="2" fill="#0b5e9f"/>
  <circle cx="13" cy="9.8" r="2.6" fill="#fff"/><circle cx="13" cy="9.8" r="1.5" fill="#0b5e9f"/>
</svg>
<div class="t" style="left:1476.5px;top:765.2px;font-size:11.8px;color:#fff">Report an issue</div>


</body></html>
